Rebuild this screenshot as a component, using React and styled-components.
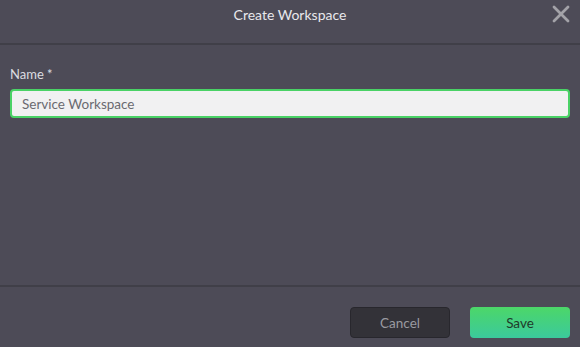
import styled, { createGlobalStyle } from "styled-components";
import { X } from "lucide-react";

const GlobalStyle = createGlobalStyle`
    html, body, #root {
        margin: 0;
        padding: 0;
        height: 100%;
    }
    body {
        background-color: #4d4b57;
        font-family: "Lato", "Open Sans", sans-serif;
    }
`

const Modal = styled.div`
    display: flex;
    flex-direction: column;
    width: 580px;
    height: 347px;
    background-color: #4d4b57;
    color: #e6e6ea;
`
const Header = styled.div`
    position: relative;
    display: flex;
    justify-content: center;
    align-items: center;
    height: 45px;
    border-bottom: 2px solid #403f48;
    box-sizing: border-box;
    padding-bottom: 14px;
`
const Title = styled.h1`
    margin: 0;
    font-size: 14px;
    font-weight: 400;
    color: #e8e8ec;
`
const CloseBtn = styled.button`
    position: absolute;
    top: 0;
    right: 5px;
    display: flex;
    background: none;
    border: none;
    padding: 0;
    color: #a3a2a8;
    cursor: pointer;
`
const Body = styled.div`
    flex: 1;
    display: flex;
    flex-direction: column;
    padding: 21px 10px 0 10px;
    border-bottom: 2px solid #403f48;
`
const Label = styled.label`
    font-size: 13px;
    color: #dcdce0;
    margin-bottom: 7px;
`
const Input = styled.input`
    height: 29px;
    box-sizing: border-box;
    border: 2px solid #4ad266;
    border-radius: 4px;
    background-color: #f1f1f2;
    padding: 0 10px;
    font-family: "Lato", "Open Sans", sans-serif;
    font-size: 13.5px;
    color: #6a6a70;
    outline: none;
`
const Footer = styled.div`
    display: flex;
    justify-content: flex-end;
    gap: 20px;
    height: 60px;
    padding: 20px 10px 0 0;
    box-sizing: border-box;
`
const Button = styled.button`
    width: 100px;
    height: 31px;
    border-radius: 4px;
    font-family: "Lato", "Open Sans", sans-serif;
    font-size: 13.5px;
    cursor: pointer;
    border: ${({ $primary }) => ($primary ? "none" : "1px solid #28272d")};
    background: ${({ $primary }) =>
        $primary ? "linear-gradient(180deg, #4cd768 0%, #3bc99c 100%)" : "#333238"};
    color: ${({ $primary }) => ($primary ? "#1f3a2a" : "#9a9aa0")};
`

const App = () => {
    return (
        <>
        <GlobalStyle />
        <Modal>
            <Header>
                <Title>Create Workspace</Title>
                <CloseBtn aria-label="Close">
                    <X size={28} strokeWidth={2.4} />
                </CloseBtn>
            </Header>
            <Body>
                <Label htmlFor="name">Name *</Label>
                <Input id="name" defaultValue="Service Workspace" />
            </Body>
            <Footer>
                <Button>Cancel</Button>
                <Button $primary>Save</Button>
            </Footer>
        </Modal>
        </>
    )
}

export default App
